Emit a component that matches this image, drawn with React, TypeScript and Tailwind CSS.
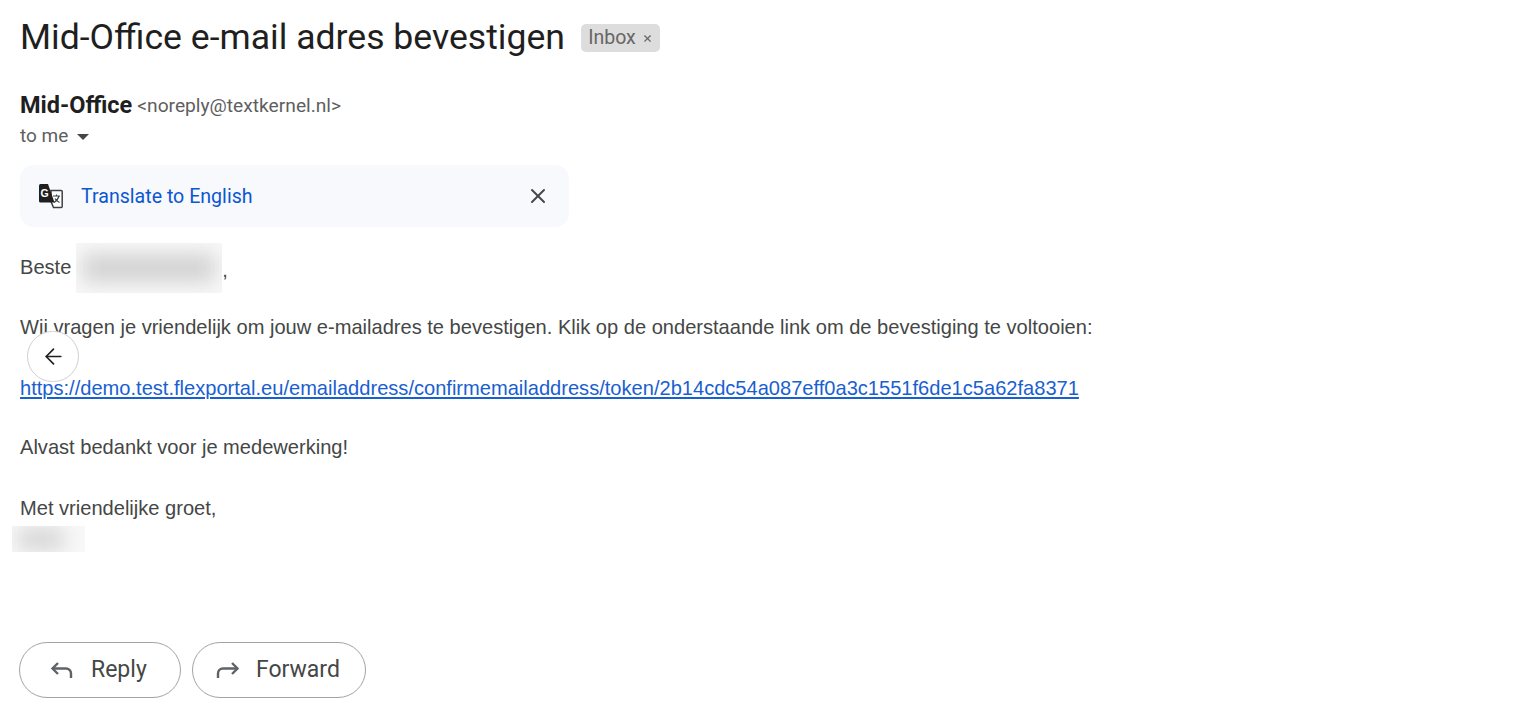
import { ArrowLeft, X } from 'lucide-react';

function TranslateIcon() {
  return (
    <svg width="27" height="27" viewBox="0 0 27 27" fill="none">
      <path d="M14 7.500h10.200a1 1 0 0 1 1 1v15a1 1 0 0 1-1 1H16.500l-2.500-6z" fill="#fff" stroke="#3c4043" strokeWidth="1.500" />
      <path d="M2 2.500a1.500 1.500 0 0 1 1.500-1.500h7.500l6.500 18.500H3.500A1.500 1.500 0 0 1 2 18z" fill="#1f1f1f" />
      <text x="3.500" y="14" fontSize="10.500" fontWeight="700" fill="#fff" fontFamily="Liberation Sans">G</text>
      <path d="M16 13h7M19.500 11.500V13M22 13c-.8 3-2.500 5-5 6.500M18 15.500c1 1.800 2.500 3 4.500 4" stroke="#3c4043" strokeWidth="1.100" />
    </svg>
  );
}

function ReplyIcon() {
  return (
    <svg width="24" height="24" viewBox="0 0 24 24" fill="none" stroke="#5f6368" strokeWidth="2.400">
      <path d="M8 5 2.500 10.500 8 16" />
      <path d="M2.500 10.500H16a5 5 0 0 1 5 5V20" />
    </svg>
  );
}

function ForwardIcon() {
  return (
    <svg width="24" height="24" viewBox="0 0 24 24" fill="none" stroke="#5f6368" strokeWidth="2.400">
      <path d="m16 5 5.500 5.500L16 16" />
      <path d="M21.500 10.500H7a5 5 0 0 0-5 5V20" />
    </svg>
  );
}

function Blurred({ className, blob }: { className: string; blob: string }) {
  return (
    <div className={`overflow-hidden bg-[#f8f8f8] ${className}`}>
      <div className={`bg-[#d2d2d2] blur-[10px] ${blob}`} />
    </div>
  );
}

export default function App() {
  return (
    <div className="relative h-[705px] overflow-hidden bg-white pl-5 font-['Liberation_Sans',sans-serif] text-[20.080px] text-[#444746]">
      {/* ── Subject ── */}
      <div className="flex h-[76px] items-center">
        <h1 className="font-['Roboto',sans-serif] text-[35.600px] font-normal text-[#1f1f1f]">Mid-Office e-mail adres bevestigen</h1>
        <span className="ml-4 flex h-[28px] w-[79px] items-center justify-center gap-[6px] rounded-[5px] bg-[#dddddd] font-['Roboto',sans-serif] text-[19.500px] text-[#666666]">
          Inbox <X size={11} strokeWidth={2.500} />
        </span>
      </div>

      {/* ── Sender ── */}
      <div className="mt-[15px] flex h-[30px] items-center gap-[5px]">
        <span className="font-['Roboto',sans-serif] text-[23.500px] font-bold text-[#1f1f1f]">Mid-Office</span>
        <span className="font-['Roboto',sans-serif] text-[19.200px] text-[#5e5e5e]">&lt;noreply@textkernel.nl&gt;</span>
      </div>
      <div className="flex h-[30px] items-center font-['Roboto',sans-serif] text-[19px] text-[#5e5e5e]">
        to me
        <span className="mt-[2px] ml-[9px] h-0 w-0 border-x-[6px] border-t-[6px] border-x-transparent border-t-[#444746]" />
      </div>

      {/* ── Translate bar ── */}
      <div className="mt-[14px] flex h-[62px] w-[549px] items-center rounded-[14px] bg-[#f7f9fd] pr-[19px] pl-[17px]">
        <TranslateIcon />
        <span className="mt-[1px] ml-[17px] flex-1 font-['Roboto',sans-serif] text-[19.600px] text-[#0b57d0]">Translate to English</span>
        <X size={24} strokeWidth={2} className="text-[#444746]" />
      </div>

      {/* ── Body ── */}
      <div className="mt-[16px] flex h-[50px] items-center">
        <span className="mt-[-2px]">Beste</span>
        <Blurred className="ml-[5px] h-[50px] w-[146px]" blob="mx-auto mt-[11px] h-[28px] w-[132px]" />
        <span className="mt-[5px]">,</span>
      </div>
      <div className="mt-[-5px] leading-[30.200px]">
        <p className="mt-[24px]">Wij vragen je vriendelijk om jouw e-mailadres te bevestigen. Klik op de onderstaande link om de bevestiging te voltooien:</p>
        <p className="mt-[30.500px]">
          <a className="text-[#1a5fd0] underline" href="#">https://demo.test.flexportal.eu/emailaddress/confirmemailaddress/token/2b14cdc54a087eff0a3c1551f6de1c5a62fa8371</a>
        </p>
        <p className="mt-[29.500px]">Alvast bedankt voor je medewerking!</p>
        <p className="mt-[30.500px]">Met vriendelijke groet,</p>
      </div>
      <Blurred className="mt-[3px] ml-[-8px] h-[26px] w-[73px]" blob="mt-[3px] ml-[6px] h-[20px] w-[46px]" />

      {/* ── Actions ── */}
      <div className="mt-[90px] ml-[-1px] flex gap-[11px] font-['Roboto',sans-serif] text-[23px] text-[#444746]">
        <button className="flex h-[56px] w-[162px] items-center rounded-full border-[1.500px] border-[#a3a3a3] pl-[30px]">
          <ReplyIcon />
          <span className="ml-[17px]">Reply</span>
        </button>
        <button className="flex h-[56px] w-[174px] items-center rounded-full border-[1.500px] border-[#a3a3a3] pl-[23px]">
          <ForwardIcon />
          <span className="ml-[16px]">Forward</span>
        </button>
      </div>

      {/* ── Floating back button ── */}
      <button className="absolute top-[331px] left-[27px] flex h-[51px] w-[52px] items-center justify-center rounded-full border border-[#d0d0d0] bg-white text-[#1f1f1f]">
        <ArrowLeft size={25} strokeWidth={1.600} />
      </button>
    </div>
  );
}
